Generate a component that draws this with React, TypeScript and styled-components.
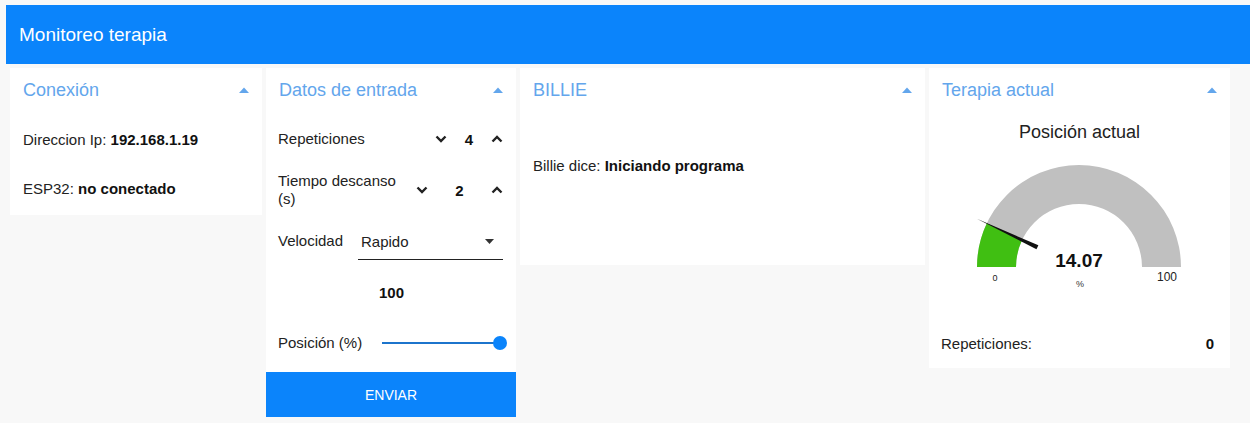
import styled, { createGlobalStyle } from "styled-components";

const GlobalStyle = createGlobalStyle`
  html, body {
    margin: 0;
    background: #f8f8f8;
  }
  body {
    font-family: "Liberation Sans", Arial, sans-serif;
    color: #222;
  }
`;

const Page = styled.div`
  width: 1250px;
  box-sizing: border-box;
  padding: 5px 0 0 6px;
`;
const TopBar = styled.header`
  height: 59px;
  display: flex;
  align-items: center;
  padding-left: 13px;
  background: #0b84fb;
  color: #fff;
  font-size: 19px;
`;
const Groups = styled.div`
  display: flex;
  align-items: flex-start;
  gap: 4px;
  padding: 4px 0 0 4px;
`;
const Group = styled.section<{ $width: number }>`
  width: ${(p) => p.$width}px;
  display: flex;
  flex-direction: column;
  background: #fff;
`;
const GroupHeader = styled.div`
  height: 44px;
  display: flex;
  align-items: center;
  justify-content: space-between;
  padding: 0 13px 0 13px;
  color: #63a6ec;
  font-size: 18px;
`;
const GroupBody = styled.div<{ $pad?: string }>`
  display: flex;
  flex-direction: column;
  gap: 1px;
  padding: ${(p) => p.$pad ?? "3px 13px 3px"};
  font-size: 15px;
`;
const FormBody = styled.div`
  display: flex;
  flex-direction: column;
  gap: 3px;
  padding-top: 3px;
  font-size: 15px;
`;
const Row = styled.div<{ $height?: number }>`
  height: ${(p) => p.$height ?? 48}px;
  display: flex;
  align-items: center;
  justify-content: space-between;
`;
const FormRow = styled.div<{ $center?: boolean }>`
  height: 48px;
  display: flex;
  align-items: center;
  justify-content: ${(p) => (p.$center ? "center" : "flex-start")};
  padding: 0 11px 0 12px;
`;
const Label = styled.span<{ $width?: number }>`
  width: ${(p) => (p.$width ? `${p.$width}px` : "auto")};
  flex-shrink: 0;
  line-height: 18px;
`;
const Strong = styled.b`
  color: #111;
`;
const Stepper = styled.div`
  flex: 1;
  display: flex;
  align-items: center;
  justify-content: space-between;
`;
const StepButton = styled.span`
  width: 16px;
  display: flex;
  justify-content: center;
`;
const StepValue = styled.b`
  color: #111;
`;
const Select = styled.div`
  flex: 1;
  align-self: flex-start;
  margin: 7px 2px 0 0;
  height: 35px;
  display: flex;
  align-items: center;
  justify-content: space-between;
  padding: 0 9px 0 3px;
  border-bottom: 1px solid #222;
`;
const Slider = styled.div`
  flex: 1;
  margin-left: 20px;
  height: 14px;
  position: relative;
  display: flex;
  align-items: center;
`;
const Track = styled.div`
  flex: 1;
  height: 2px;
  margin-right: 7px;
  background: #1c74cc;
`;
const Thumb = styled.span`
  position: absolute;
  right: -2px;
  top: 0;
  width: 14px;
  height: 14px;
  border-radius: 50%;
  background: #0b84fb;
`;
const SendButton = styled.button`
  margin-top: 5px;
  height: 45px;
  border: none;
  background: #0b84fb;
  color: #fff;
  font-family: inherit;
  font-size: 14px;
  cursor: pointer;
`;
const GaugeTitle = styled.div`
  height: 40px;
  display: flex;
  align-items: center;
  justify-content: center;
  font-size: 18px;
  color: #222;
`;
const GaugeSvg = styled.svg`
  display: block;
`;
const StatRow = styled.div`
  margin-top: 22px;
  margin-bottom: 1px;
  height: 48px;
  display: flex;
  align-items: center;
  justify-content: space-between;
  padding: 0 16px 0 12px;
  font-size: 15px;
`;

const Caret = () => (
  <svg width="10" height="6" viewBox="0 0 10 6">
    <path d="M0 6 L5 0.5 L10 6 Z" fill="#63a6ec" />
  </svg>
);

const Chevron = ({ up }: { up?: boolean }) => (
  <svg width="12" height="8" viewBox="0 0 12 8">
    <polyline
      points={up ? "1.5,6.5 6,2 10.5,6.5" : "1.5,1.5 6,6 10.5,1.5"}
      fill="none"
      stroke="#222"
      strokeWidth="2.4"
    />
  </svg>
);

const DropArrow = () => (
  <svg width="9" height="5" viewBox="0 0 9 5">
    <path d="M0 0 L9 0 L4.5 5 Z" fill="#333" />
  </svg>
);

// half ring gauge, angles measured from the left end of the arc
const cx = 150;
const cy = 115;
const R = 102;
const r = 63;

function point(rad: number, frac: number) {
  const a = Math.PI * frac;
  return [cx - rad * Math.cos(a), cy - rad * Math.sin(a)];
}

function ring(from: number, to: number) {
  const [ox1, oy1] = point(R, from);
  const [ox2, oy2] = point(R, to);
  const [ix2, iy2] = point(r, to);
  const [ix1, iy1] = point(r, from);
  return `M${ox1} ${oy1} A${R} ${R} 0 0 1 ${ox2} ${oy2} L${ix2} ${iy2} A${r} ${r} 0 0 0 ${ix1} ${iy1} Z`;
}

function Gauge({ value, min, max }: { value: number; min: number; max: number }) {
  const frac = (value - min) / (max - min);
  const a = Math.PI * frac;
  const dx = -Math.cos(a);
  const dy = -Math.sin(a);
  const px = -dy;
  const py = dx;
  const tip = [cx + dx * 113, cy + dy * 113];
  const base = [cx + dx * 46, cy + dy * 46];
  const needle = `M${tip[0]} ${tip[1]} L${base[0] + px * 2.2} ${base[1] + py * 2.2} L${base[0] - px * 2.2} ${base[1] - py * 2.2} Z`;

  return (
    <GaugeSvg width="301" height="145" viewBox="0 0 301 145">
      <path d={ring(0, 1)} fill="#c0c0c0" />
      <path d={ring(0, frac)} fill="#40bf12" />
      <path d={needle} fill="#111" />
      <text x="150" y="115" textAnchor="middle" fontSize="19" fontWeight="bold" fill="#111">
        {value.toFixed(2)}
      </text>
      <text x="66" y="129" textAnchor="middle" fontSize="9" fill="#222">
        {min}
      </text>
      <text x="238" y="129" textAnchor="middle" fontSize="12" fill="#222">
        {max}
      </text>
      <text x="151" y="135" textAnchor="middle" fontSize="9" fill="#333">
        %
      </text>
    </GaugeSvg>
  );
}

export default function App() {
  return (
    <Page>
      <GlobalStyle />
      <TopBar>Monitoreo terapia</TopBar>
      <Groups>
        <Group $width={252}>
          <GroupHeader>
            Conexión
            <Caret />
          </GroupHeader>
          <GroupBody>
            <Row>
              <span>
                Direccion Ip: <Strong>192.168.1.19</Strong>
              </span>
            </Row>
            <Row>
              <span>
                ESP32: <Strong>no conectado</Strong>
              </span>
            </Row>
          </GroupBody>
        </Group>

        <Group $width={250}>
          <GroupHeader>
            Datos de entrada
            <Caret />
          </GroupHeader>
          <FormBody>
            <FormRow>
              <Label $width={155}>Repeticiones</Label>
              <Stepper>
                <StepButton>
                  <Chevron />
                </StepButton>
                <StepValue>4</StepValue>
                <StepButton>
                  <Chevron up />
                </StepButton>
              </Stepper>
            </FormRow>
            <FormRow>
              <Label $width={136}>Tiempo descanso (s)</Label>
              <Stepper>
                <StepButton>
                  <Chevron />
                </StepButton>
                <StepValue>2</StepValue>
                <StepButton>
                  <Chevron up />
                </StepButton>
              </Stepper>
            </FormRow>
            <FormRow>
              <Label $width={80}>Velocidad</Label>
              <Select>
                <span>Rapido</span>
                <DropArrow />
              </Select>
            </FormRow>
            <FormRow $center>
              <Strong>100</Strong>
            </FormRow>
            <FormRow>
              <Label>Posición (%)</Label>
              <Slider>
                <Track />
                <Thumb />
              </Slider>
            </FormRow>
          </FormBody>
          <SendButton>ENVIAR</SendButton>
        </Group>

        <Group $width={405}>
          <GroupHeader>
            BILLIE
            <Caret />
          </GroupHeader>
          <GroupBody $pad="3px 13px 50px">
            <Row $height={100}>
              <span>
                Billie dice: <Strong>Iniciando programa</Strong>
              </span>
            </Row>
          </GroupBody>
        </Group>

        <Group $width={301}>
          <GroupHeader>
            Terapia actual
            <Caret />
          </GroupHeader>
          <GaugeTitle>Posición actual</GaugeTitle>
          <Gauge value={14.07} min={0} max={100} />
          <StatRow>
            <span>Repeticiones:</span>
            <Strong>0</Strong>
          </StatRow>
        </Group>
      </Groups>
    </Page>
  );
}
